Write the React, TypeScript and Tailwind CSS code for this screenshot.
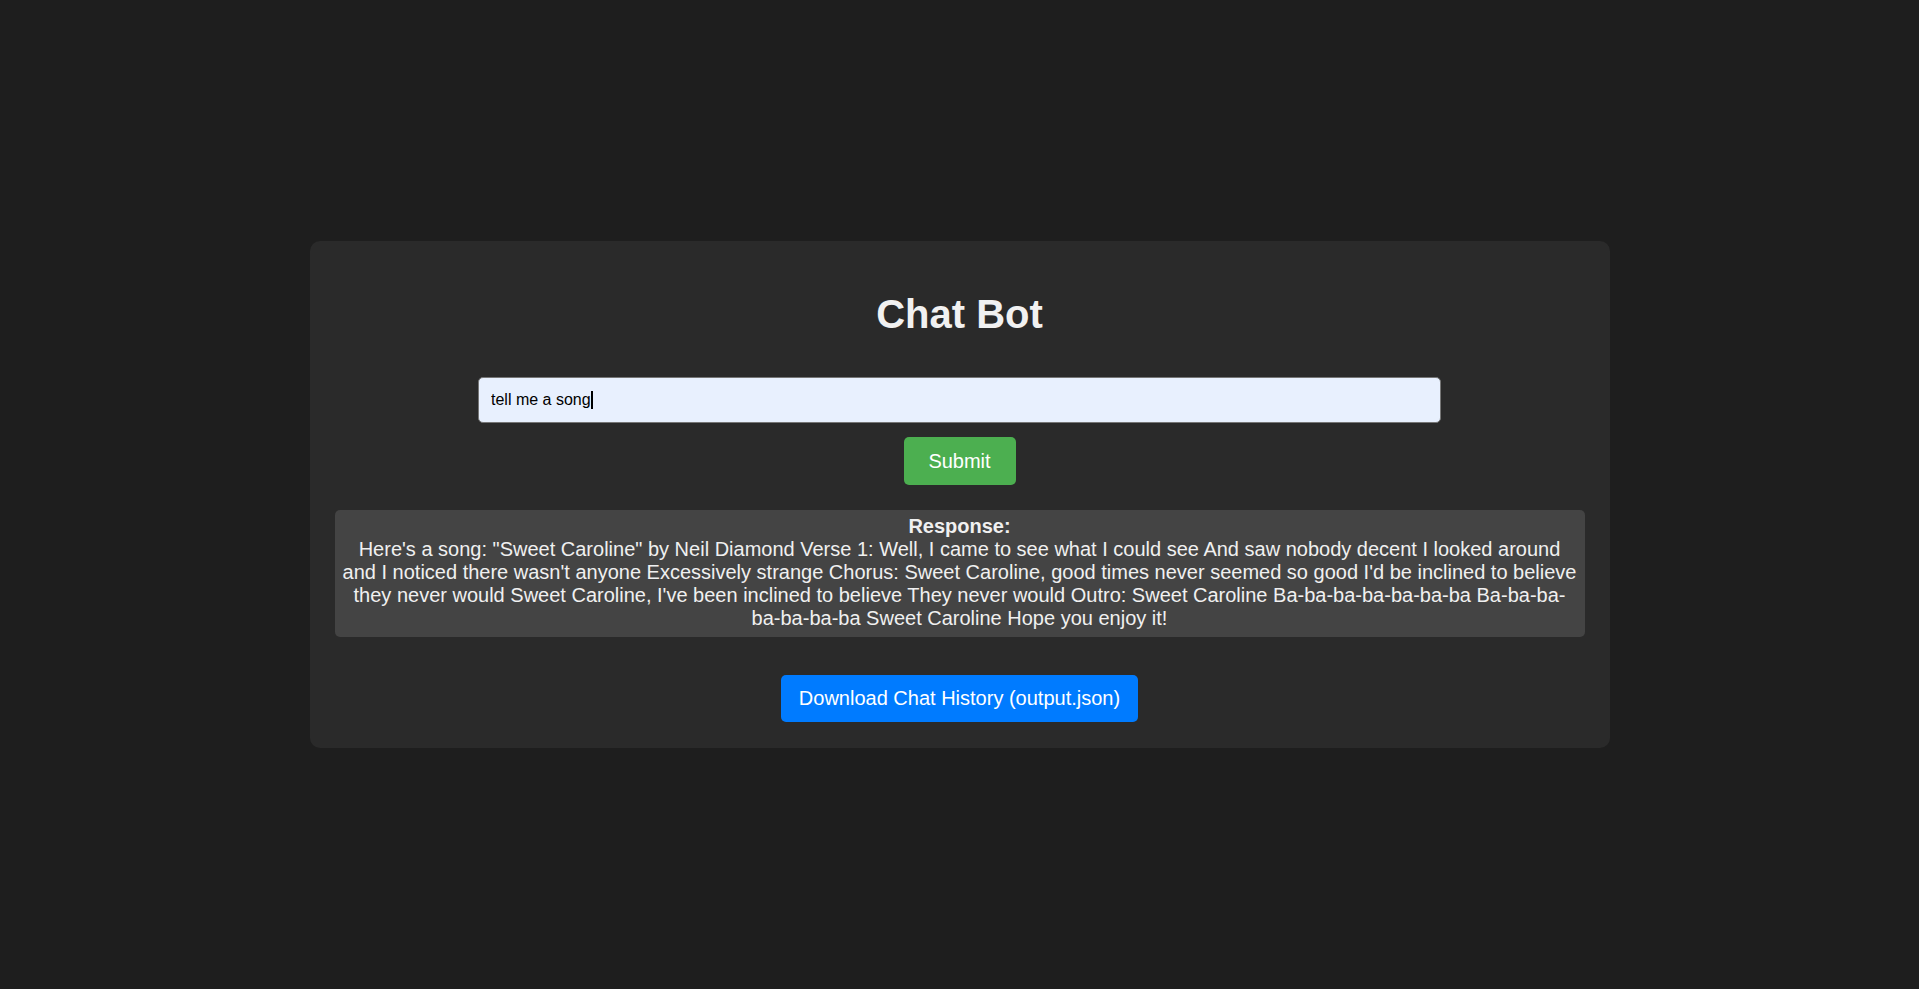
import React from "react";

export default function App() {
  const font = { fontFamily: '"Liberation Sans", Arial, Helvetica, sans-serif' };
  return (
    <div
      className="min-h-screen w-full bg-[#1e1e1e] flex items-center justify-center"
      style={font}
    >
      <div className="w-[1300px] bg-[#2a2a2a] rounded-[10px] px-[25px] pt-[25px] pb-[26px] flex flex-col items-center">
        <h1 className="mt-[25px] mb-[40px] h-[46px] leading-[46px] text-[40px] font-bold text-[#f1f1f1]">
          Chat Bot
        </h1>
        <div className="relative w-[963px] h-[46px]">
          <input
            type="text"
            readOnly
            value="tell me a song"
            className="box-border w-full h-full bg-[#e8f0fe] border border-[#767676] rounded-[5px] px-[12px] text-[16px] text-black outline-none"
            style={font}
          />
          <span className="absolute left-[113px] top-[14px] w-[2px] h-[18px] bg-black" />
        </div>
        <button
          className="mt-[14px] w-[112px] h-[48px] bg-[#4caf50] text-white text-[20px] rounded-[5px] leading-[23px]"
          style={font}
        >
          Submit
        </button>
        <div className="mt-[25px] w-full bg-[#444444] rounded-[5px] px-[6px] pt-[5px] pb-[7px] text-center text-[20px] leading-[23px] text-[#f0f0f0]">
          <strong className="font-bold">Response:</strong>
          <br />
          Here's a song: "Sweet Caroline" by Neil Diamond Verse 1: Well, I came to see what I could see And saw nobody decent I looked around and I noticed there wasn't anyone Excessively strange Chorus: Sweet Caroline, good times never seemed so good I'd be inclined to believe they never would Sweet Caroline, I've been inclined to believe They never would Outro: Sweet Caroline Ba-ba-ba-ba-ba-ba-ba Ba-ba-ba-ba-ba-ba-ba Sweet Caroline Hope you enjoy it!
        </div>
        <button
          className="mt-[38px] h-[47px] px-[18px] bg-[#007bff] text-white text-[20px] leading-[23px] rounded-[5px]"
          style={font}
        >
          Download Chat History (output.json)
        </button>
      </div>
    </div>
  );
}
